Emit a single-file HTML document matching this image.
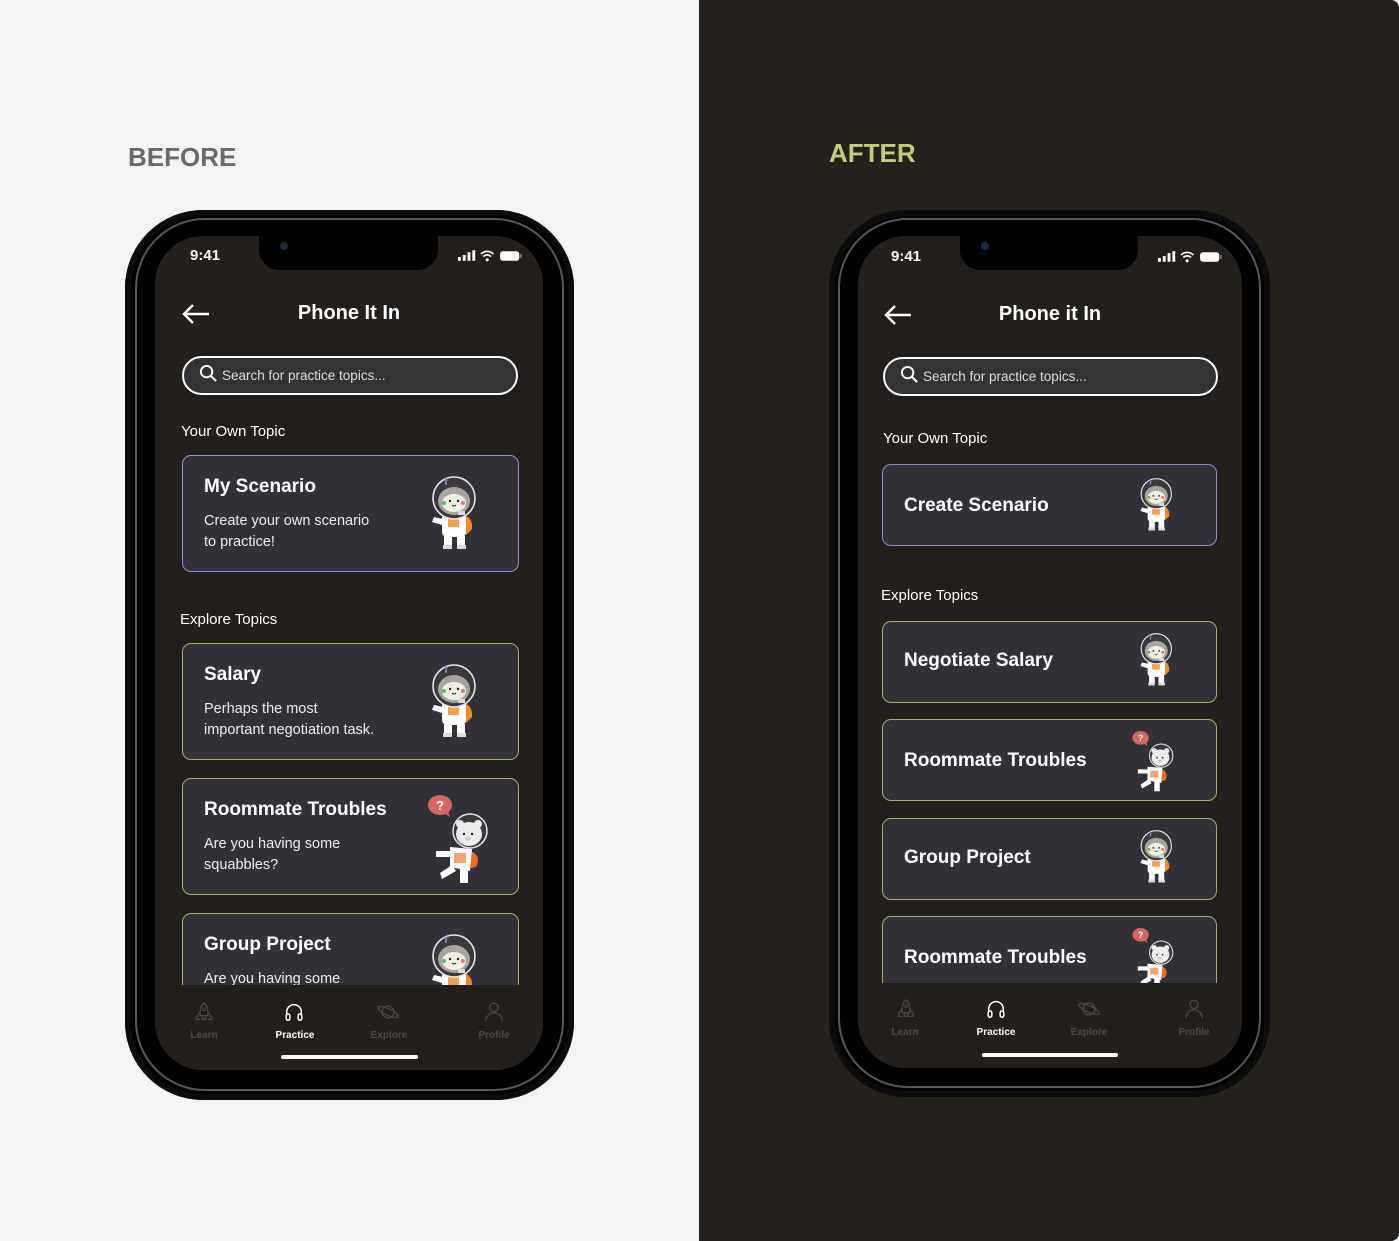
<!DOCTYPE html>
<html><head><meta charset="utf-8">
<style>
*{margin:0;padding:0;box-sizing:border-box}
body{width:1399px;height:1241px;position:relative;overflow:hidden;font-family:"Liberation Sans",sans-serif;background:#f4f4f4}
.abs{position:absolute}
.right{left:699px;top:0;width:700px;height:1241px;background:#24201b;border-radius:0 8px 8px 0}
.lbl{font-size:26px;font-weight:bold;letter-spacing:0}
.outer{position:absolute;background:#000;border-radius:78px;box-shadow:inset 0 0 0 6px #0b0b0b}
.rim{position:absolute;border:2px solid #55585e;border-radius:70px}
.screen{position:absolute;background:#221f1c;border-radius:48px;overflow:hidden}
.notch{position:absolute;top:0;height:34px;background:#000;border-radius:0 0 20px 20px}
.t{position:absolute;color:#fff;white-space:nowrap}
.search{position:absolute;border:2px solid #fff;border-radius:21px;background:#333235}
.card{position:absolute;background:#323138;border-radius:9px;border:1.5px solid #a7ad69}
.card.p{border-color:#9a88d6}
.ct{position:absolute;left:21px;color:#fff;font-weight:bold;font-size:19px;white-space:nowrap}
.cd{position:absolute;left:21px;color:#eee;font-size:14.5px;line-height:21px}
.tab{position:absolute;font-size:10px;color:#4a4846;font-weight:bold;text-align:center;width:60px}
.tab.on{color:#fff}
.home{position:absolute;height:4px;background:#fff;border-radius:3px}
</style></head><body>
<svg width="0" height="0" style="position:absolute">
<defs>
<symbol id="astro" viewBox="0 0 50 80">
<path d="M33 40 q10 2 9 14 l-6 6 l-4-6z" fill="#f08a24"/>
<rect x="12" y="38" width="24" height="24" rx="5" fill="#fff"/>
<path d="M13 44 l-9 -2 l-2 5 l10 3z" fill="#fff"/>
<rect x="14" y="60" width="8" height="12" rx="2" fill="#fff"/>
<rect x="27" y="60" width="8" height="12" rx="2" fill="#fff"/>
<rect x="13" y="70" width="9" height="4" fill="#ddd"/><rect x="27" y="70" width="9" height="4" fill="#ddd"/>
<rect x="18" y="44" width="11" height="8" fill="#f4a04a"/>
<circle cx="24" cy="23" r="21" fill="#3a3940" stroke="#e8e8e8" stroke-width="1.6"/>
<ellipse cx="24" cy="26" rx="16" ry="14" fill="#a8a49c"/>
<ellipse cx="24" cy="28" rx="12" ry="9" fill="#efeee3"/>
<circle cx="14" cy="28" r="2" fill="#5cb85c"/><circle cx="33" cy="28" r="2" fill="#e57373"/>
<circle cx="20" cy="26" r="1.2" fill="#222"/><circle cx="28" cy="26" r="1.2" fill="#222"/>
<path d="M22 30 q2 2 4 0" stroke="#222" fill="none" stroke-width="1"/>
<path d="M16 10 l0 -4" stroke="#ccc" stroke-width="1"/><circle cx="16" cy="5" r="1.5" fill="#6b7ccf"/>
<rect x="28" y="36" width="7" height="4" fill="#ddd"/>
</symbol>
<symbol id="bear" viewBox="0 0 70 100">
<ellipse cx="14" cy="14" rx="12" ry="10" fill="#d2685f"/>
<path d="M18 22 l6 4 l-2 -6z" fill="#d2685f"/>
<text x="14" y="19" font-size="13" font-weight="bold" fill="#fff" text-anchor="middle" font-family="Liberation Sans,sans-serif">?</text>
<path d="M44 60 q12 4 6 16 l-8 2z" fill="#f06a24"/>
<path d="M24 56 l22 2 l-2 22 l-20 -4z" fill="#fff"/>
<path d="M26 60 l-16 0 l0 6 l16 0z" fill="#fff"/>
<path d="M26 74 l-12 8 l2 6 l14 -8z" fill="#fff"/>
<rect x="34" y="76" width="8" height="16" fill="#fff"/>
<rect x="28" y="62" width="12" height="10" fill="#f4a470"/>
<circle cx="44" cy="40" r="17" fill="#3a3940" stroke="#e8e8e8" stroke-width="1.5"/>
<ellipse cx="43" cy="43" rx="13" ry="12" fill="#ececec"/>
<circle cx="34" cy="33" r="4" fill="#ececec"/><circle cx="52" cy="33" r="4" fill="#ececec"/>
<circle cx="38" cy="43" r="1.2" fill="#222"/><circle cx="46" cy="43" r="1.2" fill="#222"/>
<ellipse cx="42" cy="48" rx="3" ry="2" fill="#ccc"/>
</symbol>
<symbol id="learn" viewBox="0 0 24 24"><path d="M12 2 q5 4 4 14 h-8 q-1-10 4-14z M8 12 l-4 5 v3 h4 M16 12 l4 5 v3 h-4 M10 16 v4 h4 v-4" fill="none" stroke="currentColor" stroke-width="1.4"/><circle cx="12" cy="9" r="1.5" fill="none" stroke="currentColor"/></symbol>
<symbol id="prac" viewBox="0 0 24 24"><path d="M4 16 v-4 a8 8 0 0 1 16 0 v4" fill="none" stroke="currentColor" stroke-width="1.6"/><rect x="3.5" y="14" width="4" height="7" rx="2" fill="none" stroke="currentColor" stroke-width="1.6"/><rect x="16.5" y="14" width="4" height="7" rx="2" fill="none" stroke="currentColor" stroke-width="1.6"/></symbol>
<symbol id="expl" viewBox="0 0 24 24"><circle cx="12" cy="12" r="6.5" fill="none" stroke="currentColor" stroke-width="1.4"/><ellipse cx="12" cy="12" rx="12" ry="3.5" transform="rotate(25 12 12)" fill="none" stroke="currentColor" stroke-width="1.4"/></symbol>
<symbol id="prof" viewBox="0 0 24 24"><circle cx="12" cy="7" r="4.5" fill="none" stroke="currentColor" stroke-width="1.4"/><path d="M3 22 a9 9 0 0 1 18 0" fill="none" stroke="currentColor" stroke-width="1.4"/></symbol>
<symbol id="stat" viewBox="0 0 70 14"><rect x="0" y="8" width="3" height="4" fill="#fff"/><rect x="5" y="6" width="3" height="6" fill="#fff"/><rect x="10" y="3" width="3" height="9" fill="#fff"/><rect x="15" y="1" width="3" height="11" fill="#fff"/><path d="M24 5 a9 9 0 0 1 13 0 M26.5 7.5 a5.5 5.5 0 0 1 8 0" stroke="#fff" stroke-width="1.8" fill="none"/><circle cx="30.5" cy="11" r="1.6" fill="#fff"/><rect x="44" y="2" width="20" height="10" rx="3" fill="#fff"/><rect x="65" y="5" width="1.5" height="4" fill="#888"/></symbol>
<symbol id="srch" viewBox="0 0 20 20"><circle cx="8" cy="8" r="6" fill="none" stroke="#fff" stroke-width="2"/><path d="M12.5 12.5 l5.5 5.5" stroke="#fff" stroke-width="2.2"/></symbol>
<symbol id="back" viewBox="0 0 30 24"><path d="M28 12 H3 M12 3 L3 12 L12 21" stroke="#fff" stroke-width="2.4" fill="none"/></symbol>
</defs></svg>

<div class="abs right"></div>
<div class="abs lbl" style="left:128px;top:142px;color:#6a6a6a">BEFORE</div>
<div class="abs lbl" style="left:829px;top:138px;color:#c5cc78">AFTER</div>

<!-- LEFT PHONE -->
<div class="outer" style="left:125px;top:210px;width:449px;height:890px"></div>
<div class="rim" style="left:135px;top:218px;width:429px;height:873px"></div>
<div class="screen" style="left:155px;top:236px;width:388px;height:834px">
 <div class="notch" style="left:104px;width:179px"></div>
 <div class="abs" style="left:125px;top:6px;width:8px;height:8px;border-radius:50%;background:#1a2a40"></div>
 <div class="t" style="left:35px;top:11px;font-size:15px;font-weight:bold">9:41</div>
 <svg class="abs" style="left:303px;top:13px" width="67" height="14"><use href="#stat"/></svg>
 <svg class="abs" style="left:26px;top:66px" width="30" height="24"><use href="#back"/></svg>
 <div class="t" style="left:0;width:388px;text-align:center;top:66px;font-size:20px;font-weight:bold">Phone It In</div>
 <div class="search" style="left:27px;top:120px;width:336px;height:39px"><svg class="abs" style="left:15px;top:6px" width="19" height="19"><use href="#srch"/></svg><div class="t" style="left:38px;top:10px;font-size:13.5px;color:#ddd">Search for practice topics...</div></div>
 <div class="t" style="left:26px;top:187px;font-size:15px">Your Own Topic</div>
 <div class="card p" style="left:27px;top:219px;width:337px;height:117px"><div class="ct" style="top:20px">My Scenario</div><div class="cd" style="top:55px">Create your own scenario<br>to practice!</div><svg class="abs" style="left:247px;top:19px" width="50" height="80"><use href="#astro"/></svg></div>
 <div class="t" style="left:25px;top:375px;font-size:15px">Explore Topics</div>
 <div class="card" style="left:27px;top:407px;width:337px;height:117px"><div class="ct" style="top:20px">Salary</div><div class="cd" style="top:55px">Perhaps the most<br>important negotiation task.</div><svg class="abs" style="left:247px;top:19px" width="50" height="80"><use href="#astro"/></svg></div>
 <div class="card" style="left:27px;top:542px;width:337px;height:117px"><div class="ct" style="top:20px">Roommate Troubles</div><div class="cd" style="top:55px">Are you having some<br>squabbles?</div><svg class="abs" style="left:243px;top:12px" width="70" height="100"><use href="#bear"/></svg></div>
 <div class="card" style="left:27px;top:677px;width:337px;height:117px"><div class="ct" style="top:20px">Group Project</div><div class="cd" style="top:55px">Are you having some</div><svg class="abs" style="left:247px;top:19px" width="50" height="80"><use href="#astro"/></svg></div>
 <div class="abs" style="left:0;top:749px;width:388px;height:90px;background:#221f1c"></div>
 <svg class="abs" style="left:38px;top:765px;color:#4a4846" width="22" height="22"><use href="#learn"/></svg>
 <svg class="abs" style="left:128px;top:765px;color:#fff" width="22" height="22"><use href="#prac"/></svg>
 <svg class="abs" style="left:222px;top:765px;color:#4a4846" width="22" height="22"><use href="#expl"/></svg>
 <svg class="abs" style="left:328px;top:765px;color:#4a4846" width="22" height="22"><use href="#prof"/></svg>
 <div class="tab" style="left:19px;top:794px">Learn</div>
 <div class="tab on" style="left:110px;top:794px">Practice</div>
 <div class="tab" style="left:204px;top:794px">Explore</div>
 <div class="tab" style="left:309px;top:794px">Profile</div>
 <div class="home" style="left:126px;top:819px;width:137px"></div>
</div>

<!-- RIGHT PHONE -->
<div class="outer" style="left:829px;top:210px;width:441px;height:887px"></div>
<div class="rim" style="left:838px;top:218px;width:423px;height:870px"></div>
<div class="screen" style="left:858px;top:236px;width:384px;height:832px">
 <div class="notch" style="left:102px;width:178px"></div>
 <div class="abs" style="left:123px;top:6px;width:8px;height:8px;border-radius:50%;background:#1a2a40"></div>
 <div class="t" style="left:33px;top:12px;font-size:15px;font-weight:bold">9:41</div>
 <svg class="abs" style="left:300px;top:14px" width="67" height="14"><use href="#stat"/></svg>
 <svg class="abs" style="left:25px;top:67px" width="30" height="24"><use href="#back"/></svg>
 <div class="t" style="left:0;width:384px;text-align:center;top:67px;font-size:20px;font-weight:bold">Phone it In</div>
 <div class="search" style="left:25px;top:121px;width:335px;height:39px"><svg class="abs" style="left:15px;top:6px" width="19" height="19"><use href="#srch"/></svg><div class="t" style="left:38px;top:10px;font-size:13.5px;color:#ddd">Search for practice topics...</div></div>
 <div class="t" style="left:25px;top:194px;font-size:15px">Your Own Topic</div>
 <div class="card p" style="left:24px;top:228px;width:335px;height:82px"><div class="ct" style="top:30px">Create Scenario</div><svg class="abs" style="left:256px;top:12px" width="36" height="58"><use href="#astro"/></svg></div>
 <div class="t" style="left:23px;top:351px;font-size:15px">Explore Topics</div>
 <div class="card" style="left:24px;top:385px;width:335px;height:82px"><div class="ct" style="top:28px">Negotiate Salary</div><svg class="abs" style="left:256px;top:10px" width="36" height="58"><use href="#astro"/></svg></div>
 <div class="card" style="left:24px;top:483px;width:335px;height:82px"><div class="ct" style="top:30px">Roommate Troubles</div><svg class="abs" style="left:248px;top:8px" width="48" height="69"><use href="#bear"/></svg></div>
 <div class="card" style="left:24px;top:582px;width:335px;height:82px"><div class="ct" style="top:28px">Group Project</div><svg class="abs" style="left:256px;top:10px" width="36" height="58"><use href="#astro"/></svg></div>
 <div class="card" style="left:24px;top:680px;width:335px;height:82px"><div class="ct" style="top:30px">Roommate Troubles</div><svg class="abs" style="left:248px;top:8px" width="48" height="69"><use href="#bear"/></svg></div>
 <div class="abs" style="left:0;top:747px;width:384px;height:90px;background:#221f1c"></div>
 <svg class="abs" style="left:37px;top:762px;color:#4a4846" width="22" height="22"><use href="#learn"/></svg>
 <svg class="abs" style="left:127px;top:762px;color:#fff" width="22" height="22"><use href="#prac"/></svg>
 <svg class="abs" style="left:220px;top:762px;color:#4a4846" width="22" height="22"><use href="#expl"/></svg>
 <svg class="abs" style="left:325px;top:762px;color:#4a4846" width="22" height="22"><use href="#prof"/></svg>
 <div class="tab" style="left:17px;top:791px">Learn</div>
 <div class="tab on" style="left:108px;top:791px">Practice</div>
 <div class="tab" style="left:201px;top:791px">Explore</div>
 <div class="tab" style="left:306px;top:791px">Profile</div>
 <div class="home" style="left:124px;top:817px;width:136px"></div>
</div>
</body></html>
